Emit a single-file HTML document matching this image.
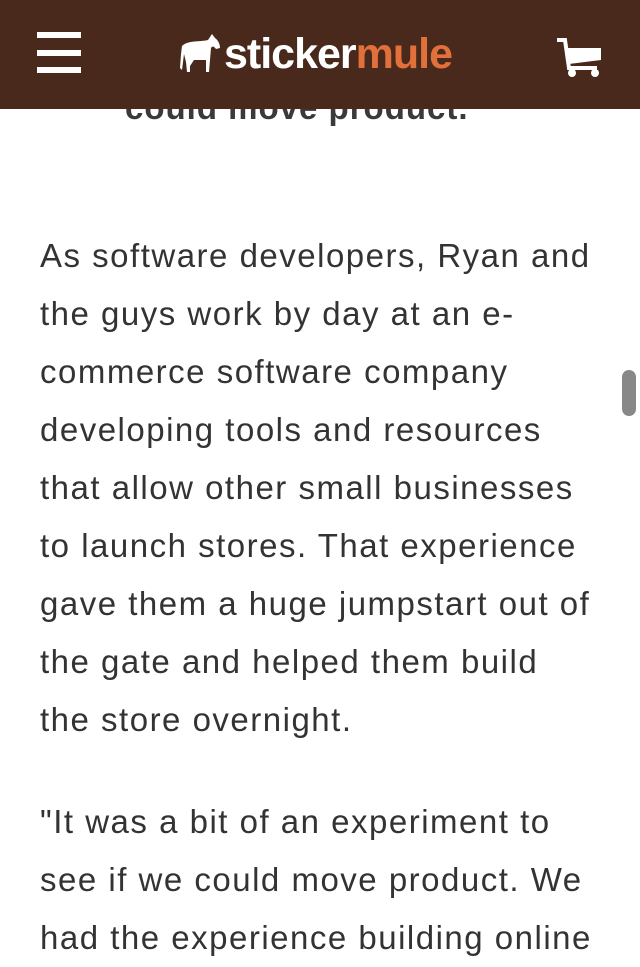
<!DOCTYPE html>
<html><head><meta charset="utf-8"><style>
html,body{margin:0;padding:0;width:640px;height:959px;overflow:hidden;background:#fff;font-family:"Liberation Sans",sans-serif;}
.hdr{position:absolute;left:0;top:0;width:640px;height:109px;background:#48291c;z-index:2}
.bar{position:absolute;left:37px;width:44px;height:6px;background:#fff}
.logo{position:absolute;left:224px;top:30px;font-size:43px;font-weight:bold;color:#fff;letter-spacing:-1px}
.logo span{color:#e2703a}
.h{position:absolute;top:89px;left:125px;font-weight:bold;font-size:33px;letter-spacing:1px;color:#3a3a3a;white-space:nowrap}
.p{position:absolute;left:40px;font-size:33px;letter-spacing:1.5px;line-height:58px;color:#333;white-space:nowrap}
.sb{position:absolute;left:622px;top:370px;width:14px;height:46px;border-radius:7px;background:#888}
</style></head><body>
<div class="h">could move product.</div>
<div class="hdr">
<div class="bar" style="top:32px"></div><div class="bar" style="top:50px"></div><div class="bar" style="top:67px"></div>
<svg style="position:absolute;left:178px;top:32px" width="46" height="42" viewBox="0 0 46 42"><path d="M4 14 C10 8 22 10 30 8 L34 2 L37 6 C40 8 42 12 42 16 L38 17 C36 14 34 14 33 16 L32 28 L31 40 L28 40 L28 28 L16 28 L12 34 L12 40 L9 40 L8 30 L6 22 L4 38 L2 36 L3 22 Z" fill="#fff"/></svg>
<div class="logo">sticker<span>mule</span></div>
<svg style="position:absolute;left:555px;top:38px" width="48" height="40" viewBox="0 0 48 40"><path d="M2 2 H10 L14 30 H42" stroke="#fff" stroke-width="4" fill="none"/><path d="M11 10 H46 V22 L14 26 Z" fill="#fff"/><circle cx="17" cy="35" r="4" fill="#fff"/><circle cx="40" cy="35" r="4" fill="#fff"/></svg>
</div>
<div class="p" style="top:227px">As software developers, Ryan and<br>the guys work by day at an e-<br>commerce software company<br>developing tools and resources<br>that allow other small businesses<br>to launch stores. That experience<br>gave them a huge jumpstart out of<br>the gate and helped them build<br>the store overnight.</div>
<div class="p" style="top:793px">"It was a bit of an experiment to<br>see if we could move product. We<br>had the experience building online</div>
<div class="sb"></div>
</body></html>
